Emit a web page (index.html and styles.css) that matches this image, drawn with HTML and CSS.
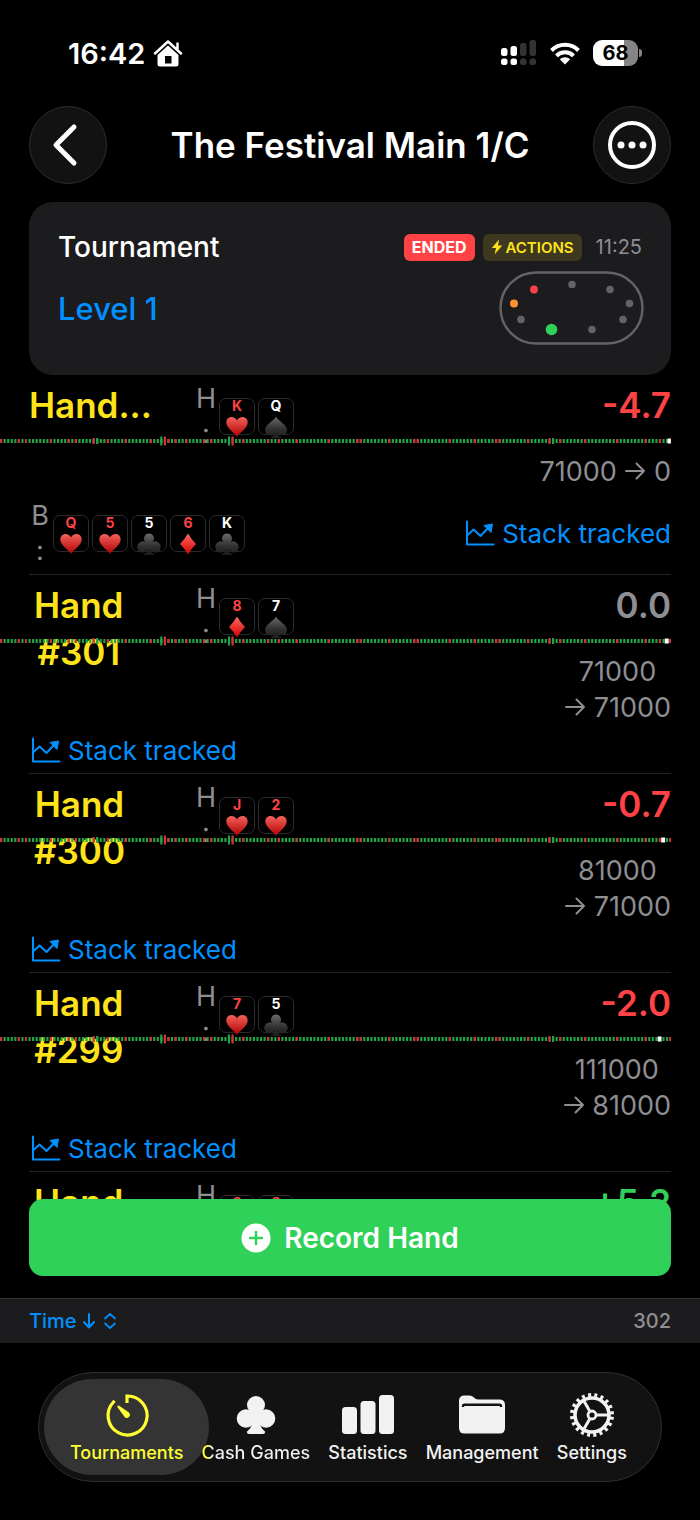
FILE: index.html
```
<!DOCTYPE html>
<html lang="en">
<head>
  <meta charset="UTF-8">
  <meta name="viewport" content="width=device-width, initial-scale=1.0">
  <title>The Festival Main 1/C</title>
  <link rel="stylesheet" href="styles.css">
</head>
<body>
  <!-- shared icons -->
  <svg class="defs" width="0" height="0" aria-hidden="true">
    <defs>
      <linearGradient id="redFill" x1="0" y1="0" x2="0" y2="1">
        <stop offset="0" stop-color="#f4615c"/>
        <stop offset="1" stop-color="#b00000"/>
      </linearGradient>
      <linearGradient id="diamondFill" x1="0" y1="0" x2="0" y2="1">
        <stop offset="0" stop-color="#ff6a62"/>
        <stop offset="1" stop-color="#d00000"/>
      </linearGradient>
      <linearGradient id="blackFill" x1="0" y1="0" x2="0" y2="1">
        <stop offset="0" stop-color="#6a6a6a"/>
        <stop offset="0.6" stop-color="#303030"/>
        <stop offset="1" stop-color="#1c1c1c"/>
      </linearGradient>
    </defs>
    <symbol id="heart" viewBox="0 0 24 24">
      <path fill="url(#redFill)" d="M12 22C10.500 18.500 1.300 13.500 1.300 7.500C1.300 4.300 3.500 2 6.500 2C9 2 11 3.500 12 5.500C13 3.500 15 2 17.500 2C20.500 2 22.700 4.300 22.700 7.500C22.700 13.500 13.500 18.500 12 22Z"/>
    </symbol>
    <symbol id="diamond" viewBox="0 0 24 24">
      <path fill="url(#diamondFill)" d="M12 1.500Q15.500 7.500 20 12Q15.500 16.500 12 22.500Q8.500 16.500 4 12Q8.500 7.500 12 1.500Z"/>
    </symbol>
    <symbol id="spade" viewBox="0 0 24 24">
      <path fill="url(#blackFill)" d="M12 1.500C13.500 5.500 23 9.500 23 15C23 18 21 20 18 20C16 20 14 19.200 13 17.800C13.200 20 14.500 21.300 17 21.800V23H7V21.800C9.500 21.300 10.800 20 11 17.800C10 19.200 8 20 6 20C3 20 1 18 1 15C1 9.500 10.500 5.500 12 1.500Z"/>
    </symbol>
    <symbol id="club" viewBox="0 0 24 24">
      <path fill="url(#blackFill)" d="M12 1.500A5 5 0 0 1 15.500 10A5.600 5.600 0 1 1 13 17.300C13.200 20 14.500 21.300 17 21.800V23H7V21.800C9.500 21.300 10.800 20 11 17.300A5.600 5.600 0 1 1 8.500 10A5 5 0 0 1 12 1.500Z"/>
    </symbol>
    <symbol id="chart" viewBox="0 0 30 26">
      <path fill="none" stroke="currentColor" stroke-width="2" stroke-linecap="round" stroke-linejoin="round" d="M2 1.500V24.500H28.500M2 15.500L8.500 9.500L15.500 16L23 8"/>
      <path fill="currentColor" stroke="currentColor" stroke-linejoin="round" d="M19 5.500L27.500 4L26 12.500Z"/>
    </symbol>
    <symbol id="arrow" viewBox="0 0 22 20">
      <path fill="none" stroke="currentColor" stroke-width="2" stroke-linecap="round" stroke-linejoin="round" d="M2 10H20M12.500 2.500L20 10L12.500 17.500"/>
    </symbol>
    <!-- one unit per hand, 0 to 188 -->
    <symbol id="strip" viewBox="0 0 188.400 10" preserveAspectRatio="none">
      <path stroke="#24a648" stroke-width="4" stroke-dasharray="0.600 0.400" d="M0 5H188.400"/>
      <path stroke="#24a648" stroke-width="0.600" d="M27.300 2v6M45.300 0.500v9M64.300 0.500v9M155.300 2v6"/>
      <path stroke="#d9303a" stroke-width="0.600" d="M0.300 3v4M5.300 3v4M7.300 3v4M14.300 3v4M19.300 3v4M21.300 3v4M26.300 2v6M30.300 3v4M35.300 3v4M42.300 3v4M46.300 0.500v9M47.300 3v4M49.300 3v4M52.300 3v4M57.300 3v4M59.300 3v4M65.300 0.500v9M68.300 3v4M75.300 3v4M78.300 3v4M83.300 3v4M92.300 3v4M100.300 3v4M101.300 3v4M109.300 3v4M116.300 3v4M117.300 3v4M126.300 3v4M133.300 3v4M139.300 3v4M140.300 3v4M148.300 3v4M154.300 2v6M157.300 3v4M164.300 3v4M173.300 3v4M181.300 3v4M185.300 3v4M188.200 3v4"/>
    </symbol>
  </svg>

  <div class="app">
    <div class="status">
      <span class="clock">16:42</span>
      <svg class="home" viewBox="0 0 30 28" width="30" height="28">
        <path fill="none" stroke="#fff" stroke-width="2.500" stroke-linecap="round" stroke-linejoin="round" d="M2 14.500L15 2.500L28 14.500M24.500 4.500V10"/>
        <path fill="#fff" fill-rule="evenodd" d="M15 6.500L25.500 16V25Q25.500 27.500 23 27.500H7Q4.500 27.500 4.500 25V16ZM12 17V24.500H18.500V17Z"/>
      </svg>
      <svg class="signal" viewBox="0 0 36 26" width="36" height="26">
        <g fill="#fff">
          <rect x="0" y="8" width="6.500" height="8" rx="2.500"/><rect x="0" y="18.500" width="6.500" height="6.500" rx="2.500"/>
          <rect x="9.500" y="6" width="6.500" height="10" rx="2.500"/><rect x="9.500" y="18.500" width="6.500" height="6.500" rx="2.500"/>
        </g>
        <g fill="#333">
          <rect x="19" y="3" width="6.500" height="13" rx="2.500"/><rect x="19" y="18.500" width="6.500" height="6.500" rx="2.500"/>
          <rect x="28.500" y="0" width="6.500" height="16" rx="2.500"/><rect x="28.500" y="18.500" width="6.500" height="6.500" rx="2.500"/>
        </g>
      </svg>
      <svg class="wifi" viewBox="0 0 30 23" width="30" height="23">
        <path fill="none" stroke="#fff" stroke-width="4" d="M1.500 8.500A19 19 0 0 1 28.500 8.500M6.500 13.800A12 12 0 0 1 23.500 13.800"/>
        <path fill="#fff" d="M15 22.500L9.800 17.300A7.400 7.400 0 0 1 20.200 17.300Z"/>
      </svg>
      <span class="battery">68</span>
    </div>

    <header class="topbar">
      <button class="round" aria-label="Back">
        <svg viewBox="0 0 44 44" width="44" height="44"><path fill="none" stroke="#fff" stroke-width="5" stroke-linecap="round" stroke-linejoin="round" d="M28 4L10 22L28 40"/></svg>
      </button>
      <h1>The Festival Main 1/C</h1>
      <button class="round" aria-label="More">
        <svg viewBox="0 0 50 50" width="50" height="50"><circle cx="25" cy="25" r="22" fill="none" stroke="#fff" stroke-width="4"/><g fill="#fff"><circle cx="14" cy="25" r="3.500"/><circle cx="25" cy="25" r="3.500"/><circle cx="36" cy="25" r="3.500"/></g></svg>
      </button>
    </header>

    <section class="summary">
      <div class="summary-row">
        <h2>Tournament</h2>
        <span class="badge ended">ENDED</span>
        <span class="badge actions">
          <svg viewBox="0 0 12 16" width="12" height="16"><path fill="currentColor" d="M8 0.500L0.800 9H5L3.500 15.500L11.200 6.500H7Z"/></svg>ACTIONS
        </span>
        <time>11:25</time>
      </div>
      <div class="summary-row seats">
        <span class="level">Level 1</span>
        <svg viewBox="0 0 146 74" width="146" height="74">
          <rect x="1.500" y="1.500" width="142" height="71" rx="35.500" fill="none" stroke="#636366" stroke-width="2.500"/>
          <g fill="#636366">
            <circle cx="73" cy="13.500" r="3.800"/><circle cx="111" cy="18.500" r="3.800"/><circle cx="130.500" cy="32.500" r="3.800"/>
            <circle cx="124" cy="48.500" r="3.800"/><circle cx="93" cy="58.500" r="3.800"/><circle cx="22" cy="48.500" r="3.800"/>
          </g>
          <circle cx="35" cy="18.500" r="3.900" fill="#ff4245"/>
          <circle cx="15" cy="32.500" r="4" fill="#ff9230"/>
          <circle cx="52.500" cy="58.500" r="5.800" fill="#30d158"/>
        </svg>
      </div>
    </section>

    <main class="hands">
      <article class="hand">
        <div class="hand-top">
          <h3 class="short">Hand...</h3>
          <div class="cards"><span class="tag">H<br>:</span>
            <span class="card red">K<svg><use href="#heart"/></svg></span>
            <span class="card">Q<svg><use href="#spade"/></svg></span>
          </div>
          <div class="result">
            <strong class="loss">-4.7</strong>
            <span class="stack">71000 <svg class="arrow"><use href="#arrow"/></svg> 0</span>
          </div>
        </div>
        <div class="hand-bottom with-board">
          <div class="cards"><span class="tag">B<br>:</span>
            <span class="card red">Q<svg><use href="#heart"/></svg></span>
            <span class="card red">5<svg><use href="#heart"/></svg></span>
            <span class="card">5<svg><use href="#club"/></svg></span>
            <span class="card red">6<svg><use href="#diamond"/></svg></span>
            <span class="card">K<svg><use href="#club"/></svg></span>
          </div>
          <span class="tracked"><svg><use href="#chart"/></svg>Stack tracked</span>
        </div>
        <svg class="strip" viewBox="0 0 188.400 10" preserveAspectRatio="none"><use href="#strip"/><path stroke="#fff" stroke-width="0.900" d="M187.900 2.500v5"/></svg>
      </article>

      <article class="hand">
        <div class="hand-top">
          <h3>Hand<br>#301</h3>
          <div class="cards"><span class="tag">H<br>:</span>
            <span class="card red">8<svg><use href="#diamond"/></svg></span>
            <span class="card">7<svg><use href="#spade"/></svg></span>
          </div>
          <div class="result">
            <strong class="even">0.0</strong>
            <span class="stack">71000<br><svg class="arrow"><use href="#arrow"/></svg> 71000</span>
          </div>
        </div>
        <div class="hand-bottom">
          <span class="tracked"><svg><use href="#chart"/></svg>Stack tracked</span>
        </div>
        <svg class="strip" viewBox="0 0 188.400 10" preserveAspectRatio="none"><use href="#strip"/><path stroke="#fff" stroke-width="1.100" d="M187.200 2.500v5"/></svg>
      </article>

      <article class="hand">
        <div class="hand-top">
          <h3>Hand<br>#300</h3>
          <div class="cards"><span class="tag">H<br>:</span>
            <span class="card red">J<svg><use href="#heart"/></svg></span>
            <span class="card red">2<svg><use href="#heart"/></svg></span>
          </div>
          <div class="result">
            <strong class="loss">-0.7</strong>
            <span class="stack">81000<br><svg class="arrow"><use href="#arrow"/></svg> 71000</span>
          </div>
        </div>
        <div class="hand-bottom">
          <span class="tracked"><svg><use href="#chart"/></svg>Stack tracked</span>
        </div>
        <svg class="strip" viewBox="0 0 188.400 10" preserveAspectRatio="none"><use href="#strip"/><path stroke="#fff" stroke-width="1.100" d="M186.200 2.500v5"/></svg>
      </article>

      <article class="hand">
        <div class="hand-top">
          <h3>Hand<br>#299</h3>
          <div class="cards"><span class="tag">H<br>:</span>
            <span class="card red">7<svg><use href="#heart"/></svg></span>
            <span class="card">5<svg><use href="#club"/></svg></span>
          </div>
          <div class="result">
            <strong class="loss">-2.0</strong>
            <span class="stack">111000<br><svg class="arrow"><use href="#arrow"/></svg> 81000</span>
          </div>
        </div>
        <div class="hand-bottom">
          <span class="tracked"><svg><use href="#chart"/></svg>Stack tracked</span>
        </div>
        <svg class="strip" viewBox="0 0 188.400 10" preserveAspectRatio="none"><use href="#strip"/><path stroke="#fff" stroke-width="1.100" d="M185.200 2.500v5"/></svg>
      </article>

      <article class="hand">
        <div class="hand-top">
          <h3>Hand</h3>
          <div class="cards"><span class="tag">H<br>:</span>
            <span class="card red">8</span>
            <span class="card red">8</span>
          </div>
          <div class="result">
            <strong class="win">+5.2</strong>
          </div>
        </div>
      </article>
    </main>

    <div class="record-wrap">
      <button class="record">
        <svg viewBox="0 0 30 30" width="30" height="30"><circle cx="15" cy="15" r="14.500" fill="#fff"/><path stroke="#30d158" stroke-width="2.400" stroke-linecap="round" d="M15 9V21M9 15H21"/></svg>
        Record Hand
      </button>
    </div>

    <div class="sortbar">
      <button class="sort">Time
        <svg viewBox="0 0 32 18" width="32" height="18"><path fill="none" stroke="currentColor" stroke-width="2" stroke-linecap="round" stroke-linejoin="round" d="M6 2V15M1 10L6 15.500L11 10"/><path fill="none" stroke="currentColor" stroke-width="1.700" stroke-linecap="round" stroke-linejoin="round" d="M22 6.500L27 2L32 6.500M22 11.500L27 16L32 11.500"/></svg>
      </button>
      <span class="count">302</span>
    </div>

    <nav class="tabs">
      <a class="tab active" href="#tournaments">
        <svg viewBox="0 0 44 44" width="44" height="44">
          <path fill="none" stroke="currentColor" stroke-width="3.200" stroke-linecap="square" d="M22 8.500V3A19.500 19.500 0 1 1 8.500 9"/>
          <path fill="currentColor" d="M12.700 12.800Q13.400 12.200 14.200 12.700L24 19.600A3.200 3.200 0 0 1 20 24.500L12.500 14.200Q12 13.400 12.700 12.800Z"/>
        </svg>
        <span>Tournaments</span>
      </a>
      <a class="tab under" href="#cash">
        <svg viewBox="0 0 44 44" width="44" height="44"><g fill="currentColor"><circle cx="22" cy="12" r="9"/><circle cx="12" cy="25.500" r="9.300"/><circle cx="32" cy="25.500" r="9.300"/><path d="M20 12H24L25 25Q25 34 31 38.500Q31.500 41 29 41H15Q12.500 41 13 38.500Q19 34 19 25Z"/></g></svg>
        <span>Cash Games</span>
      </a>
      <a class="tab" href="#statistics">
        <svg viewBox="0 0 52 44" width="52" height="44"><g fill="currentColor"><rect x="0" y="14" width="15" height="27" rx="3.500"/><rect x="18.500" y="8" width="15" height="33" rx="3.500"/><rect x="37" y="2" width="15" height="39" rx="3.500"/></g></svg>
        <span>Statistics</span>
      </a>
      <a class="tab" href="#management">
        <svg viewBox="0 0 46 44" width="46" height="44"><path fill="currentColor" d="M0 8Q0 2.500 5.500 2.500H10Q13 2.500 15 4.500L16 5.500Q17.500 6.500 19.500 6.500H40.500Q46 6.500 46 12V35Q46 40.500 40.500 40.500H5.500Q0 40.500 0 35Z"/><path fill="none" stroke="#121212" stroke-width="2.400" d="M4 14V13Q4 11.700 5.500 11.700H40.500Q42 11.700 42 13V14"/></svg>
        <span>Management</span>
      </a>
      <a class="tab" href="#settings">
        <svg viewBox="0 0 44 44" width="44" height="44"><g fill="none" stroke="currentColor"><circle cx="22" cy="22" r="17" stroke-width="3.600"/><circle cx="22" cy="22" r="20" stroke-width="4" stroke-dasharray="3 3.283" transform="rotate(5 22 22)"/><circle cx="22" cy="22" r="4" stroke-width="2.800"/><path stroke-width="3" d="M26.500 22H38M19.700 18L13.500 7.300M19.700 26L13.500 36.700"/></g></svg>
        <span>Settings</span>
      </a>
    </nav>
  </div>
</body>
</html>
```

FILE: styles.css
```
* {
  box-sizing: border-box;
}
body {
  margin: 0;
  background: #000;
  color: #fff;
  font-family: Inter, "Liberation Sans", sans-serif;
}
h1, h2, h3 {
  margin: 0;
}
button {
  border: none;
  font-family: inherit;
  cursor: pointer;
}
svg {
  flex: none;
  overflow: visible;
}
.defs {
  position: absolute;
}
.app {
  display: flex;
  flex-direction: column;
  height: 100vh;
}

/* status bar */
.status {
  display: flex;
  align-items: center;
  height: 106px;
  padding: 0 62px 0 68px;
  flex: none;
}
.clock {
  font-size: 29px;
  font-weight: 600;
}
.home {
  margin-left: 8px;
}
.signal {
  margin-left: auto;
}
.wifi {
  margin: 0 13px;
}
.battery {
  position: relative;
  width: 45px;
  border-radius: 9px;
  background: linear-gradient(to right, #fff 68%, #858585 68%);
  color: #000;
  font-size: 20px;
  font-weight: 700;
  line-height: 26px;
  text-align: center;
}
.battery::after {
  content: "";
  position: absolute;
  left: 46px;
  top: 9px;
  width: 3px;
  height: 8px;
  border-radius: 0 4px 4px 0;
  background: #858585;
}

/* header */
.topbar {
  display: flex;
  align-items: center;
  justify-content: space-between;
  padding: 0 29px;
  flex: none;
}
.topbar h1 {
  font-size: 35px;
  font-weight: 600;
}
.round {
  display: flex;
  align-items: center;
  justify-content: center;
  width: 78px;
  height: 78px;
  padding: 0;
  border: 1px solid #2c2c2c;
  border-radius: 50%;
  background: #121212;
}

/* tournament card */
.summary {
  margin: 18px 29px 0;
  padding: 28px 26px 30px 29px;
  border-radius: 24px;
  background: #1c1c1e;
  flex: none;
}
.summary-row {
  display: flex;
  align-items: center;
  gap: 8px;
  height: 34px;
}
.summary h2 {
  margin-right: auto;
  font-size: 28px;
  font-weight: 500;
}
.badge {
  display: flex;
  align-items: center;
  gap: 3px;
  height: 27px;
  padding: 0 8px;
  border-radius: 6px;
  font-size: 16px;
  font-weight: 700;
}
.ended {
  background: #ff4245;
}
.actions {
  background: #3e3820;
  color: #ffe31a;
  font-size: 15px;
  font-weight: 600;
}
.summary time {
  margin: 0 3px 0 6px;
  color: #8e8e93;
  font-size: 20px;
}
.seats {
  justify-content: space-between;
  height: 74px;
  margin-top: 7px;
}
.level {
  color: #0091ff;
  font-size: 31px;
  font-weight: 500;
}

/* hand list */
.hands {
  flex: 1;
  min-height: 0;
  overflow: hidden;
}
.hand {
  position: relative;
  height: 199px;
  padding: 7px 0 0;
  margin: 0 29px;
}
.hand + .hand {
  border-top: 1px solid #242426;
}
.hand-top {
  display: grid;
  grid-template-columns: 167px auto 1fr;
  align-items: start;
  height: 146px;
}
.hand h3 {
  justify-self: start;
  padding-left: 5px;
  color: #ffe31a;
  font-size: 35px;
  font-weight: 600;
  line-height: 47px;
  text-align: center;
}
.hand h3.short {
  padding-left: 0;
}
.cards {
  display: flex;
  align-items: center;
  gap: 3px;
  height: 68px;
}
.tag {
  width: 20px;
  color: #8e8e93;
  font-size: 27px;
  line-height: 35px;
  text-align: center;
}
.card {
  display: flex;
  flex-direction: column;
  align-items: center;
  width: 36px;
  height: 37px;
  border: 1px solid #2a2a2c;
  border-radius: 7px;
  font-size: 14px;
  font-weight: 700;
  line-height: 14px;
}
.card svg {
  width: 24px;
  height: 24px;
  margin-top: 2px;
}
.red {
  color: #ff4245;
}
.result {
  display: flex;
  flex-direction: column;
  align-items: flex-end;
  gap: 25px;
}
.result strong {
  font-size: 35px;
  font-weight: 600;
  line-height: 47px;
}
.loss {
  color: #ff4245;
}
.win {
  color: #30d158;
}
.even {
  color: #8e8e93;
}
.stack {
  color: #8e8e93;
  font-size: 27px;
  line-height: 36px;
  text-align: center;
}
.arrow {
  width: 22px;
  height: 20px;
}
.hand-bottom {
  display: flex;
  align-items: center;
  height: 44px;
  padding-left: 2px;
}
.with-board {
  justify-content: space-between;
  height: 70px;
  margin-top: -30px;
}
.with-board .cards {
  margin-left: -1px;
}
.tracked {
  display: flex;
  align-items: center;
  gap: 7px;
  color: #0091ff;
  font-size: 26px;
}
.tracked svg {
  width: 30px;
  height: 26px;
}
.strip {
  position: absolute;
  left: -29px;
  top: 61px;
  width: calc(100% + 29px);
  height: 10px;
}

/* bottom */
.record-wrap {
  position: relative;
  margin-top: -12px;
  padding: 0 29px 22px;
  flex: none;
}
.record-wrap::before {
  content: "";
  position: absolute;
  inset: 12px 0 0;
  background: #000;
}
.record {
  position: relative;
  display: flex;
  align-items: center;
  justify-content: center;
  gap: 13px;
  width: 100%;
  height: 77px;
  border-radius: 14px;
  background: #30d158;
  color: #fff;
  font-size: 28px;
  font-weight: 600;
}
.sortbar {
  display: flex;
  align-items: center;
  justify-content: space-between;
  height: 45px;
  padding: 0 29px;
  border-top: 1px solid #343436;
  background: #1c1c1e;
  font-size: 20px;
  font-weight: 500;
  flex: none;
}
.sort {
  display: flex;
  align-items: center;
  gap: 6px;
  padding: 0;
  background: none;
  color: #0091ff;
  font-size: 20px;
  font-weight: 500;
}
.count {
  color: #8e8e93;
}
.tabs {
  display: flex;
  justify-content: space-between;
  height: 110px;
  margin: 29px 38px 38px;
  padding: 20px 34px 0 31px;
  border: 1px solid #2e2e2e;
  border-radius: 55px;
  background: #121212;
  flex: none;
}
.tab {
  position: relative;
  display: flex;
  flex-direction: column;
  align-items: center;
  gap: 4px;
  color: #f2f2f2;
  font-size: 18px;
  font-weight: 500;
  line-height: 24px;
  text-decoration: none;
}
.tab svg, .tab span {
  position: relative;
}
.active {
  color: #ffff33;
}
.active::before {
  content: "";
  position: absolute;
  inset: -14px -26px 6px;
  border-radius: 48px;
  background: #343434;
}
.under span {
  background: linear-gradient(to right, #ffff33 6px, #f2f2f2 9px);
  background-clip: text;
  color: transparent;
}
```
